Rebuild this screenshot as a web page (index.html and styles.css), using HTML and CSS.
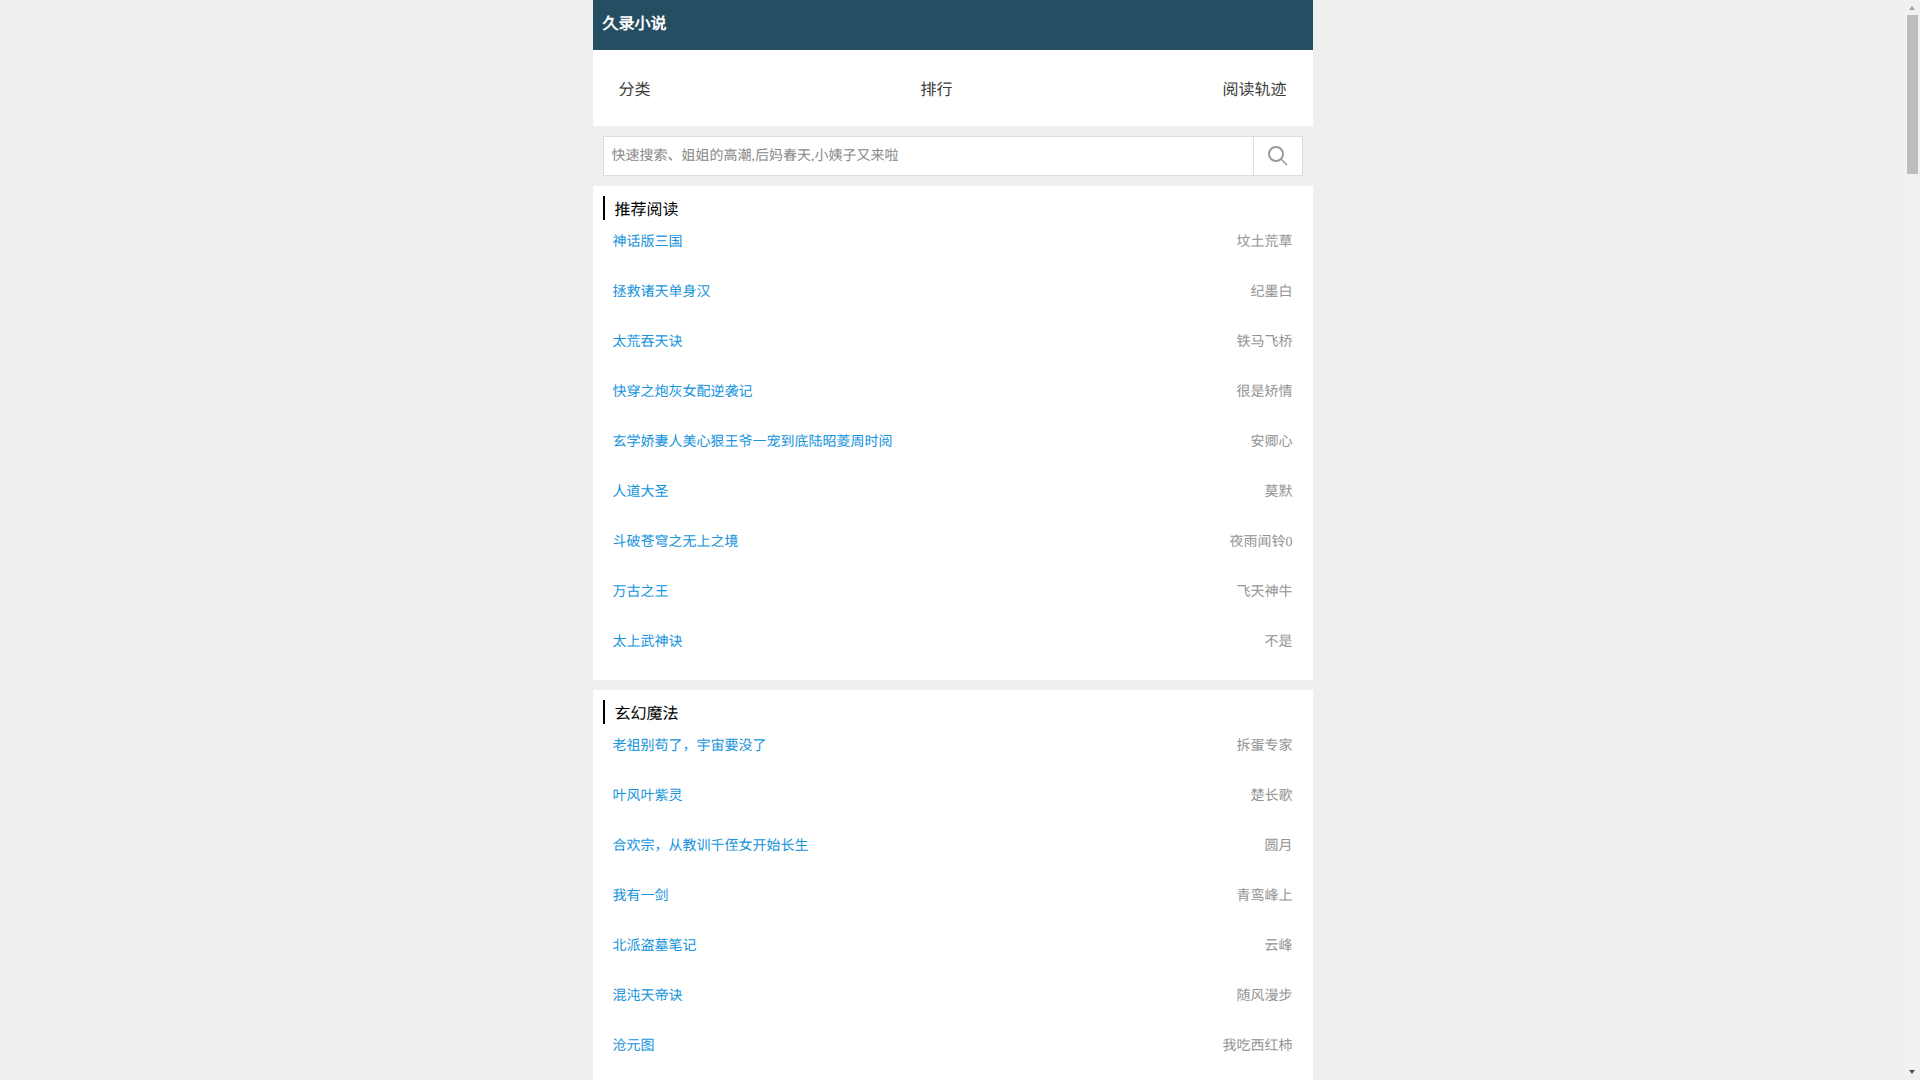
FILE: index.html
```html
<!DOCTYPE html>
<html lang="zh-CN">
<head>
<meta charset="utf-8">
<title>久录小说</title>
<link rel="stylesheet" href="styles.css">
</head>
<body>
<div class="viewport">
<div class="page">
  <header class="topbar"><a class="logo">久录小说</a></header>
  <nav class="nav"><a>分类</a><a>排行</a><a>阅读轨迹</a></nav>
  <form class="search">
    <input class="search-input" type="text" placeholder="快速搜索、姐姐的高潮,后妈春天,小姨子又来啦">
    <button class="search-btn" type="button" aria-label="搜索">
      <svg width="20" height="20" viewBox="0 0 20 20" fill="none" stroke="#999" stroke-width="2"><circle cx="8" cy="8" r="7"/><path d="M13 13l6 6" stroke-width="1.5"/></svg>
    </button>
  </form>
  <section class="block">
    <h2 class="block-title">推荐阅读</h2>
    <ul class="list">
      <li><a>神话版三国</a><span>坟土荒草</span></li>
      <li><a>拯救诸天单身汉</a><span>纪墨白</span></li>
      <li><a>太荒吞天诀</a><span>铁马飞桥</span></li>
      <li><a>快穿之炮灰女配逆袭记</a><span>很是矫情</span></li>
      <li><a>玄学娇妻人美心狠王爷一宠到底陆昭菱周时阅</a><span>安卿心</span></li>
      <li><a>人道大圣</a><span>莫默</span></li>
      <li><a>斗破苍穹之无上之境</a><span>夜雨闻铃0</span></li>
      <li><a>万古之王</a><span>飞天神牛</span></li>
      <li><a>太上武神诀</a><span>不是</span></li>
    </ul>
  </section>
  <section class="block">
    <h2 class="block-title">玄幻魔法</h2>
    <ul class="list">
      <li><a>老祖别苟了，宇宙要没了</a><span>拆蛋专家</span></li>
      <li><a>叶风叶紫灵</a><span>楚长歌</span></li>
      <li><a>合欢宗，从教训千侄女开始长生</a><span>圆月</span></li>
      <li><a>我有一剑</a><span>青鸾峰上</span></li>
      <li><a>北派盗墓笔记</a><span>云峰</span></li>
      <li><a>混沌天帝诀</a><span>随风漫步</span></li>
      <li><a>沧元图</a><span>我吃西红柿</span></li>
    </ul>
  </section>
</div>
</div>
<div class="scrollbar" aria-hidden="true">
  <span class="arrow-up"></span>
  <span class="thumb"></span>
  <span class="arrow-down"></span>
</div>
</body>
</html>
```
FILE: styles.css
```css
* { box-sizing: border-box; }
html, body { height: 100%; }
body {
  margin: 0;
  background: #efefef;
  font-family: "Liberation Serif", serif;
  font-size: 14px;
  text-rendering: geometricPrecision;
  overflow: hidden;
}
.viewport { width: calc(100% - 15px); height: 100%; overflow: hidden; }
.page { width: 720px; margin: 0 auto; }
.topbar {
  height: 50px;
  background: #254e62;
  padding: 0 10px;
  line-height: 50px;
}
.logo { color: #fff; font-size: 16px; font-weight: bold; }
.nav {
  height: 76px;
  background: #fff;
  display: flex;
  justify-content: space-between;
  padding: 0 26px;
  align-items: center;
  font-size: 16px;
  color: #3c3c3c;
}
.search {
  display: flex;
  height: 40px;
  margin: 10px;
  border: 1px solid #ddd;
  background: #fff;
}
.search-input {
  flex: 1;
  border: 0;
  outline: 0;
  padding: 2px 8px 0;
  font: inherit;
  text-rendering: geometricPrecision;
  color: #333;
  background: transparent;
}
.search-input::placeholder { color: #888; opacity: 1; }
.search-btn {
  width: 49px;
  border: 0;
  border-left: 1px solid #ddd;
  background: #fff;
  padding: 0;
  display: flex;
  align-items: center;
  justify-content: center;
}
.block { background: #fff; padding: 10px 0; margin-bottom: 10px; }
.block-title {
  margin: 0 0 0 10px;
  height: 24px;
  line-height: 30px;
  border-left: 2px solid #000;
  padding-left: 10px;
  font-size: 16px;
  font-weight: normal;
  color: #000;
}
.list { list-style: none; margin: 0; padding: 0; }
.list li {
  height: 50px;
  display: flex;
  justify-content: space-between;
  align-items: flex-start;
  padding: 13px 20px 0;
  line-height: 20px;
}
.list a { color: #1593dc; }
.list span { color: #949494; }
.scrollbar {
  position: fixed;
  top: 0;
  right: 0;
  bottom: 0;
  width: 15px;
  background: #f1f1f1;
}
.thumb {
  position: absolute;
  top: 15px;
  left: 2px;
  width: 11px;
  height: 159px;
  background: #bdbdbd;
}
.arrow-up, .arrow-down {
  position: absolute;
  left: 4px;
  width: 0;
  height: 0;
  border-left: 3.5px solid transparent;
  border-right: 3.5px solid transparent;
}
.arrow-up { top: 6px; border-bottom: 4px solid #a3a3a3; }
.arrow-down { bottom: 6px; border-top: 4px solid #505050; }
```
